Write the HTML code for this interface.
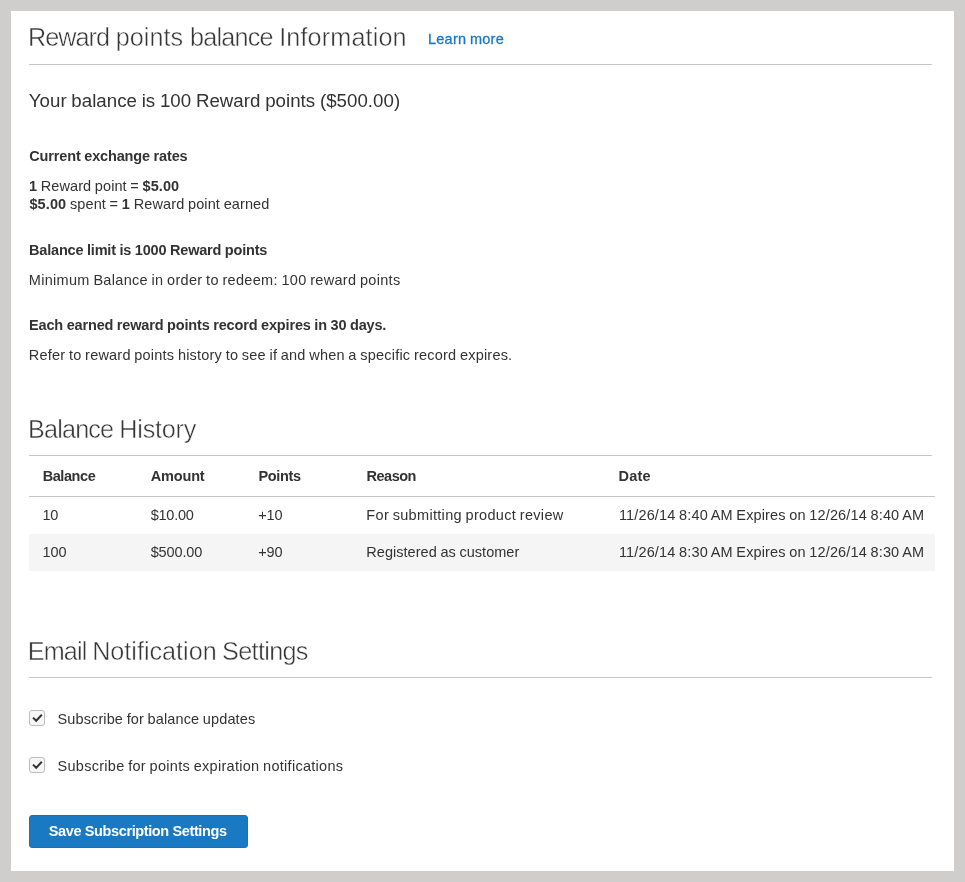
<!DOCTYPE html>
<html lang="en">
<head>
<meta charset="utf-8">
<title>Reward points balance Information</title>
<style>
html,body{margin:0;padding:0;}
body{width:965px;height:882px;background:#cfcecc;position:relative;overflow:hidden;font-family:"Liberation Sans",sans-serif;color:#333;}
.page{position:absolute;left:11px;top:11px;width:943px;height:860px;background:#fff;}
.layer{position:absolute;left:0;top:0;width:965px;height:882px;will-change:transform;}
.t{position:absolute;white-space:nowrap;line-height:20px;margin:0;padding:0;font-weight:400;}
.t b{font-weight:700;}
.g{margin:0;padding:0;font-size:inherit;font-weight:400;position:static;}
a.t{text-decoration:none;cursor:pointer;}
.hr{position:absolute;height:1px;background:#c6c6c6;left:29px;width:903px;}
.rowbg{position:absolute;left:29px;width:906px;background:#f5f5f5;}
.cb{position:absolute;left:29px;width:14px;height:14px;border:1px solid #bdbdbd;border-radius:3px;background:#f6f6f6;box-sizing:content-box;}
.cb svg{position:absolute;left:0;top:0;width:14px;height:14px;}
.btn{display:block;margin:0;padding:0;position:absolute;left:29px;top:815px;width:219px;height:33px;background:#1979c3;border:1px solid #1672c0;border-radius:3px;box-sizing:border-box;}
</style>
</head>
<body>
<div class="page"></div>
<div class="hr" style="top:64px"></div>
<div class="hr" style="top:455px"></div>
<div class="hr" style="top:496px;width:906px"></div>
<div class="rowbg" style="top:534px;height:37px"></div>
<div class="hr" style="top:677px"></div>
<div class="cb" style="top:710px"><svg viewBox="0 0 14 14"><path d="M3.0 6.6 L6.2 9.8 L11.8 3.8" fill="none" stroke="#333" stroke-width="2" stroke-linecap="butt" stroke-linejoin="miter"/></svg></div>
<div class="cb" style="top:757px"><svg viewBox="0 0 14 14"><path d="M3.0 6.6 L6.2 9.8 L11.8 3.8" fill="none" stroke="#333" stroke-width="2" stroke-linecap="butt" stroke-linejoin="miter"/></svg></div>
<button class="btn" type="button" aria-label="Save Subscription Settings"></button>
<div class="layer">
<h1 class="g">
<span class="t" id="t1a" style="left:27.95px;top:27.27px;font-size:25.2px;color:#363636;letter-spacing:-0.950px;-webkit-text-stroke:0.45px #fff;">Reward</span>
<span class="t" id="t1b" style="left:115.71px;top:27.27px;font-size:25.2px;color:#363636;letter-spacing:0.059px;-webkit-text-stroke:0.45px #fff;">points</span>
<span class="t" id="t1c" style="left:189.95px;top:27.27px;font-size:25.2px;color:#363636;letter-spacing:-0.786px;-webkit-text-stroke:0.45px #fff;">balance</span>
<span class="t" id="t1d" style="left:279.13px;top:27.27px;font-size:25.2px;color:#363636;letter-spacing:0.148px;-webkit-text-stroke:0.45px #fff;">Information</span>
</h1>
<a class="t" id="t2" style="left:427.96px;top:28.98px;font-size:14.5px;color:#1979c3;letter-spacing:0.252px;word-spacing:-0.643px;-webkit-text-stroke:0.3px #1979c3;">Learn more</a>
<div class="t" id="t3" style="left:28.77px;top:90.52px;font-size:18.7px;color:#333333;letter-spacing:0.030px;word-spacing:-0.534px;">Your balance is 100 Reward points ($500.00)</div>
<div class="t" id="t4" style="left:29.29px;top:145.98px;font-size:14.5px;color:#333333;letter-spacing:-0.150px;word-spacing:-0.241px;font-weight:700;">Current exchange rates</div>
<div class="t" id="t5" style="left:29.00px;top:175.58px;font-size:14.5px;color:#333333;letter-spacing:0.077px;word-spacing:-0.468px;"><b>1</b> Reward point = <b>$5.00</b></div>
<div class="t" id="t6" style="left:29.42px;top:193.78px;font-size:14.5px;color:#333333;letter-spacing:0.116px;word-spacing:-0.507px;"><b>$5.00</b> spent = <b>1</b> Reward point earned</div>
<div class="t" id="t7" style="left:29.00px;top:239.58px;font-size:14.5px;color:#333333;letter-spacing:-0.186px;word-spacing:-0.205px;font-weight:700;">Balance limit is 1000 Reward points</div>
<div class="t" id="t8" style="left:28.82px;top:269.58px;font-size:14.5px;color:#333333;letter-spacing:0.305px;word-spacing:-0.696px;">Minimum Balance in order to redeem: 100 reward points</div>
<div class="t" id="t9" style="left:29.00px;top:315.48px;font-size:14.5px;color:#333333;letter-spacing:-0.162px;word-spacing:-0.229px;font-weight:700;">Each earned reward points record expires in 30 days.</div>
<div class="t" id="t10" style="left:28.82px;top:344.78px;font-size:14.5px;color:#333333;letter-spacing:0.208px;word-spacing:-0.598px;">Refer to reward points history to see if and when a specific record expires.</div>
<h2 class="g">
<span class="t" id="t11a" style="left:28.05px;top:418.57px;font-size:25.2px;color:#363636;letter-spacing:-0.829px;-webkit-text-stroke:0.45px #fff;">Balance</span>
<span class="t" id="t11b" style="left:119.29px;top:418.57px;font-size:25.2px;color:#363636;letter-spacing:-0.211px;-webkit-text-stroke:0.45px #fff;">History</span>
</h2>
<div class="t" id="h1" style="left:42.66px;top:465.78px;font-size:14.5px;color:#333333;letter-spacing:-0.428px;font-weight:700;">Balance</div>
<div class="t" id="h2" style="left:150.64px;top:465.78px;font-size:14.5px;color:#333333;letter-spacing:-0.141px;font-weight:700;">Amount</div>
<div class="t" id="h3" style="left:258.53px;top:465.78px;font-size:14.5px;color:#333333;letter-spacing:-0.371px;font-weight:700;">Points</div>
<div class="t" id="h4" style="left:366.53px;top:465.78px;font-size:14.5px;color:#333333;letter-spacing:-0.485px;font-weight:700;">Reason</div>
<div class="t" id="h5" style="left:618.53px;top:465.78px;font-size:14.5px;color:#333333;letter-spacing:0.237px;font-weight:700;">Date</div>
<div class="t" id="r11" style="left:42.46px;top:505.08px;font-size:14.5px;color:#333333;letter-spacing:-0.152px;">10</div>
<div class="t" id="r12" style="left:150.65px;top:505.08px;font-size:14.5px;color:#333333;letter-spacing:-0.214px;">$10.00</div>
<div class="t" id="r13" style="left:258.16px;top:505.08px;font-size:14.5px;color:#333333;letter-spacing:-0.124px;">+10</div>
<div class="t" id="r14" style="left:366.35px;top:505.08px;font-size:14.5px;color:#333333;letter-spacing:0.315px;word-spacing:-0.706px;">For submitting product review</div>
<div class="t" id="r15" style="left:618.95px;top:505.08px;font-size:14.5px;color:#333333;letter-spacing:0.139px;word-spacing:-0.530px;">11/26/14 8:40 AM Expires on 12/26/14 8:40 AM</div>
<div class="t" id="r21" style="left:42.47px;top:541.98px;font-size:14.5px;color:#333333;letter-spacing:-0.047px;">100</div>
<div class="t" id="r22" style="left:150.66px;top:541.98px;font-size:14.5px;color:#333333;letter-spacing:-0.132px;">$500.00</div>
<div class="t" id="r23" style="left:258.16px;top:541.98px;font-size:14.5px;color:#333333;letter-spacing:-0.121px;">+90</div>
<div class="t" id="r24" style="left:366.35px;top:541.98px;font-size:14.5px;color:#333333;letter-spacing:0.030px;word-spacing:-0.421px;">Registered as customer</div>
<div class="t" id="r25" style="left:618.95px;top:541.98px;font-size:14.5px;color:#333333;letter-spacing:0.139px;word-spacing:-0.530px;">11/26/14 8:30 AM Expires on 12/26/14 8:30 AM</div>
<h2 class="g">
<span class="t" id="t12a" style="left:27.85px;top:640.67px;font-size:25.2px;color:#363636;letter-spacing:-0.895px;-webkit-text-stroke:0.45px #fff;">Email</span>
<span class="t" id="t12b" style="left:92.17px;top:640.67px;font-size:25.2px;color:#363636;letter-spacing:-0.003px;-webkit-text-stroke:0.45px #fff;">Notification</span>
<span class="t" id="t12c" style="left:222.11px;top:640.67px;font-size:25.2px;color:#363636;letter-spacing:-0.665px;-webkit-text-stroke:0.45px #fff;">Settings</span>
</h2>
<label class="t" id="c1" style="left:57.51px;top:708.78px;font-size:14.5px;color:#333333;letter-spacing:0.119px;word-spacing:-0.510px;">Subscribe for balance updates</label>
<label class="t" id="c2" style="left:57.51px;top:755.88px;font-size:14.5px;color:#333333;letter-spacing:0.287px;word-spacing:-0.677px;">Subscribe for points expiration notifications</label>
<div class="t" id="b1" style="left:48.81px;top:820.98px;font-size:14.5px;color:#ffffff;letter-spacing:-0.381px;word-spacing:-0.010px;font-weight:700;">Save Subscription Settings</div>
</div>
</body>
</html>
